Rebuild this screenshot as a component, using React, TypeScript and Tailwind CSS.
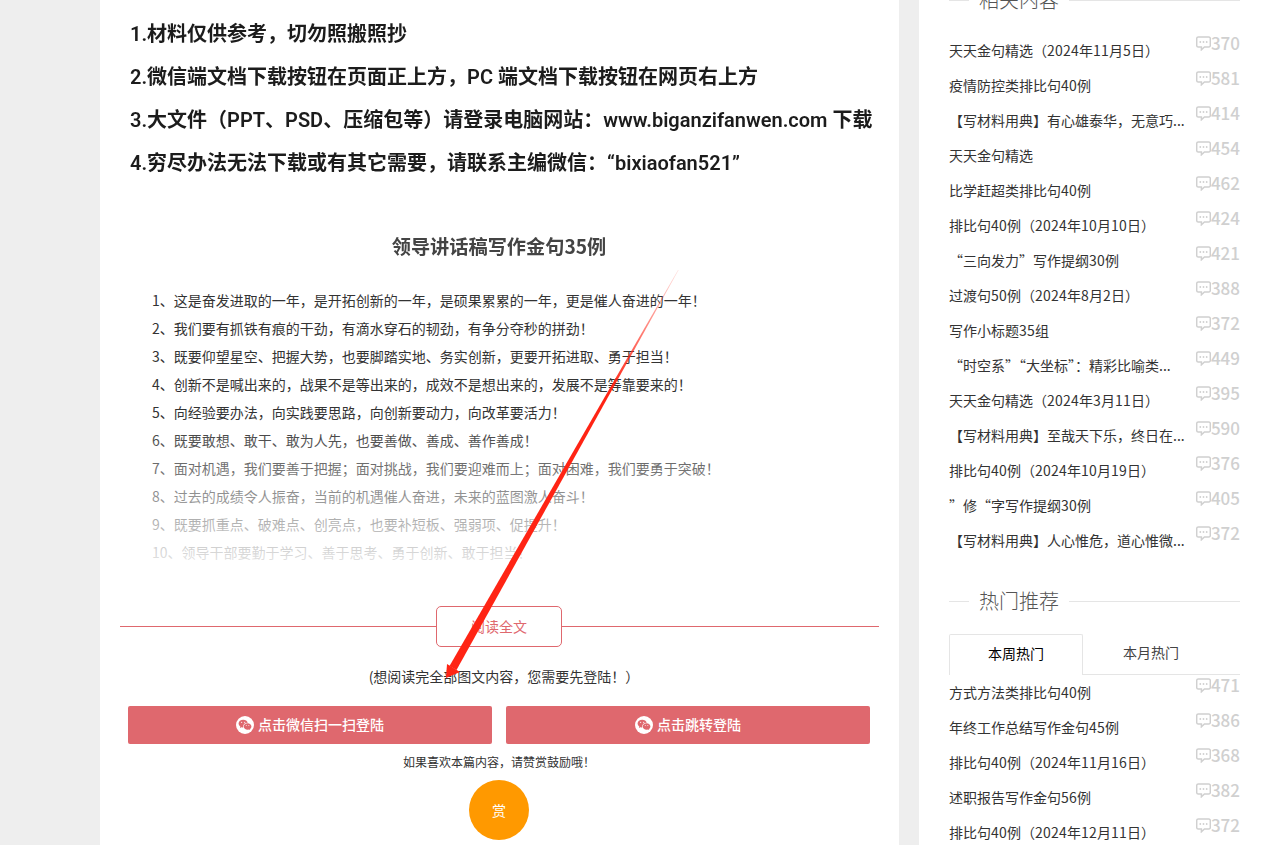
import { RiWechatFill } from "react-icons/ri";

const font = { fontFamily: '"Noto Sans CJK SC", "Liberation Sans", sans-serif' };
const noteFont = { fontFamily: 'Roboto, "Noto Sans CJK SC", sans-serif' };

const related: [string, number][] = [
  ["天天金句精选（2024年11月5日）", 370],
  ["疫情防控类排比句40例", 581],
  ["【写材料用典】有心雄泰华，无意巧...", 414],
  ["天天金句精选", 454],
  ["比学赶超类排比句40例", 462],
  ["排比句40例（2024年10月10日）", 424],
  ["“三向发力”写作提纲30例", 421],
  ["过渡句50例（2024年8月2日）", 388],
  ["写作小标题35组", 372],
  ["“时空系”“大坐标”：精彩比喻类...", 449],
  ["天天金句精选（2024年3月11日）", 395],
  ["【写材料用典】至哉天下乐，终日在...", 590],
  ["排比句40例（2024年10月19日）", 376],
  ["”修“字写作提纲30例", 405],
  ["【写材料用典】人心惟危，道心惟微...", 372],
];

const hot: [string, number][] = [
  ["方式方法类排比句40例", 471],
  ["年终工作总结写作金句45例", 386],
  ["排比句40例（2024年11月16日）", 368],
  ["述职报告写作金句56例", 382],
  ["排比句40例（2024年12月11日）", 372],
];

const notes = [
  "1.材料仅供参考，切勿照搬照抄",
  "2.微信端文档下载按钮在页面正上方，PC 端文档下载按钮在网页右上方",
  "3.大文件（PPT、PSD、压缩包等）请登录电脑网站：www.biganzifanwen.com 下载",
  "4.穷尽办法无法下载或有其它需要，请联系主编微信：“bixiaofan521”",
];

const lines = [
  "1、这是奋发进取的一年，是开拓创新的一年，是硕果累累的一年，更是催人奋进的一年！",
  "2、我们要有抓铁有痕的干劲，有滴水穿石的韧劲，有争分夺秒的拼劲！",
  "3、既要仰望星空、把握大势，也要脚踏实地、务实创新，更要开拓进取、勇于担当！",
  "4、创新不是喊出来的，战果不是等出来的，成效不是想出来的，发展不是等靠要来的！",
  "5、向经验要办法，向实践要思路，向创新要动力，向改革要活力！",
  "6、既要敢想、敢干、敢为人先，也要善做、善成、善作善成！",
  "7、面对机遇，我们要善于把握；面对挑战，我们要迎难而上；面对困难，我们要勇于突破！",
  "8、过去的成绩令人振奋，当前的机遇催人奋进，未来的蓝图激人奋斗！",
  "9、既要抓重点、破难点、创亮点，也要补短板、强弱项、促提升！",
  "10、领导干部要勤于学习、善于思考、勇于创新、敢于担当！",
];

function Heading({ text }: { text: string }) {
  return (
    <div className="flex h-[28px] items-center">
      <div className="h-px w-[20px] bg-[#e5e5e5]" />
      <div className="mx-[10px] text-[20px] leading-[28px] font-light text-[#555]">{text}</div>
      <div className="h-px flex-1 bg-[#e5e5e5]" />
    </div>
  );
}

function Title({ text }: { text: string }) {
  return (
    <div className="text-[14px] leading-[35px] whitespace-nowrap text-[#333]">
      {text.split(/(\d+)/).map((part, i) =>
        i % 2 === 1 ? (
          <span key={i} className="tracking-[0.23px]">
            {part}
          </span>
        ) : (
          <span key={i}>{part}</span>
        ),
      )}
    </div>
  );
}

function Row({ title, count }: { title: string; count: number }) {
  return (
    <div className="flex h-[35px] items-start justify-between">
      <Title text={title} />
      <div className="flex h-[20px] items-center text-[17px] leading-[20px] font-medium text-[#d0d0d0]">
        <svg width="15" height="15" viewBox="0 0 15 15" fill="none" stroke="#d0d0d0" strokeWidth="1.5">
          <path d="M2.2 1h10.6A1.5 1.5 0 0 1 14.3 2.5v7A1.5 1.5 0 0 1 12.8 11H8.4l-3 2.8V11H2.2A1.5 1.5 0 0 1 .7 9.5v-7A1.5 1.5 0 0 1 2.2 1z" />
          <circle cx="4.3" cy="6" r="0.9" fill="#d0d0d0" stroke="none" />
          <circle cx="7.5" cy="6" r="0.9" fill="#d0d0d0" stroke="none" />
          <circle cx="10.7" cy="6" r="0.9" fill="#d0d0d0" stroke="none" />
        </svg>
        {count}
      </div>
    </div>
  );
}

function LoginButton({ text }: { text: string }) {
  return (
    <div className="flex h-[38px] w-[364px] items-center justify-center rounded-[2px] bg-[#df686e] pb-[1px] text-[14px] font-medium text-white">
      <span className="mr-[4px] flex h-[18px] w-[18px] items-center justify-center rounded-full bg-white">
        <RiWechatFill className="h-[14px] w-[14px] text-[#df686e]" />
      </span>
      {text}
    </div>
  );
}

export default function App() {
  return (
    <div className="relative h-[845px] w-full overflow-hidden bg-[#eeeeee]" style={font}>
      <div className="-mt-[20px] flex">
        <main className="ml-[100px] w-[799px] bg-white pt-[33px] pr-[1px]">
          <div
            className="pl-[30px] text-[20px] leading-[43px] font-semibold whitespace-nowrap text-[#1c1c1c] blur-[0.3px]"
            style={noteFont}
          >
            {notes.map((n) => (
              <div key={n}>{n}</div>
            ))}
          </div>
          <h1 className="mt-[47px] text-center text-[19.2px] leading-[28px] font-bold text-[#444] blur-[0.3px]">
            领导讲话稿写作金句35例
          </h1>
          <div className="relative mt-[26px] pl-[52px] text-[14px] leading-[28px] text-[#333]">
            {lines.map((l) => (
              <div key={l}>{l}</div>
            ))}
            <div className="absolute right-0 bottom-[-20px] left-0 h-[170px] bg-gradient-to-b from-white/0 to-white" />
          </div>
          <div className="mt-[40px] mr-[-1px] flex items-center pl-[20px] pr-[20px]">
            <div className="h-px w-[316px] bg-[#df686e]" />
            <div className="flex h-[41px] w-[126px] items-center justify-center rounded-[5px] border border-[#df686e] text-[14px] text-[#df686e]">
              阅读全文
            </div>
            <div className="h-px flex-1 bg-[#df686e]" />
          </div>
          <p className="mt-[19px] pl-[10px] text-center text-[14px] leading-[20px] text-[#333]">
            (想阅读完全部图文内容，您需要先登陆！）
          </p>
          <div className="mt-[20px] flex justify-center gap-[14px]">
            <LoginButton text="点击微信扫一扫登陆" />
            <LoginButton text="点击跳转登陆" />
          </div>
          <p className="mt-[8px] text-center text-[12px] leading-[20px] text-[#333]">如果喜欢本篇内容，请赞赏鼓励哦！</p>
          <div className="mx-auto mt-[8px] mb-[40px] flex h-[60px] w-[60px] items-center justify-center rounded-full bg-[#ff9900] text-[14px] text-white">
            赏
          </div>
        </main>
        <aside className="ml-[20px] flex-1 self-start bg-white pt-[6px] pr-[26px] pl-[30px] pb-[40px]">
          <Heading text="相关内容" />
          <div className="mt-[19px]">
            {related.map(([t, c], i) => (
              <Row key={i} title={t} count={c} />
            ))}
          </div>
          <div className="mt-[29px]">
            <Heading text="热门推荐" />
          </div>
          <div className="mt-[19px] flex h-[41px] border-b border-[#e5e5e5] text-[14px] text-[#333]">
            <div className="-mb-px flex h-[41px] w-[134px] items-center justify-center rounded-t-[2px] border border-b-0 border-[#e5e5e5] bg-white pb-[3px] text-black">
              本周热门
            </div>
            <div className="flex w-[136px] items-center justify-center pb-[3px] text-[#444]">本月热门</div>
          </div>
          <div>
            {hot.map(([t, c], i) => (
              <Row key={i} title={t} count={c} />
            ))}
          </div>
        </aside>
      </div>
      <svg className="pointer-events-none absolute top-0 left-0" width="1266" height="845" viewBox="0 0 1266 845">
        <defs>
          <linearGradient id="tail" gradientUnits="userSpaceOnUse" x1="678" y1="270" x2="610" y2="390">
            <stop offset="0" stopColor="#ff2414" stopOpacity="0.15" />
            <stop offset="1" stopColor="#ff2414" stopOpacity="1" />
          </linearGradient>
        </defs>
        <polygon points="678.6,270 456.5,670 449.5,666 678,270" fill="url(#tail)" />
        <polygon points="446,678 447,664 460,672" fill="#ff2414" />
      </svg>
    </div>
  );
}
